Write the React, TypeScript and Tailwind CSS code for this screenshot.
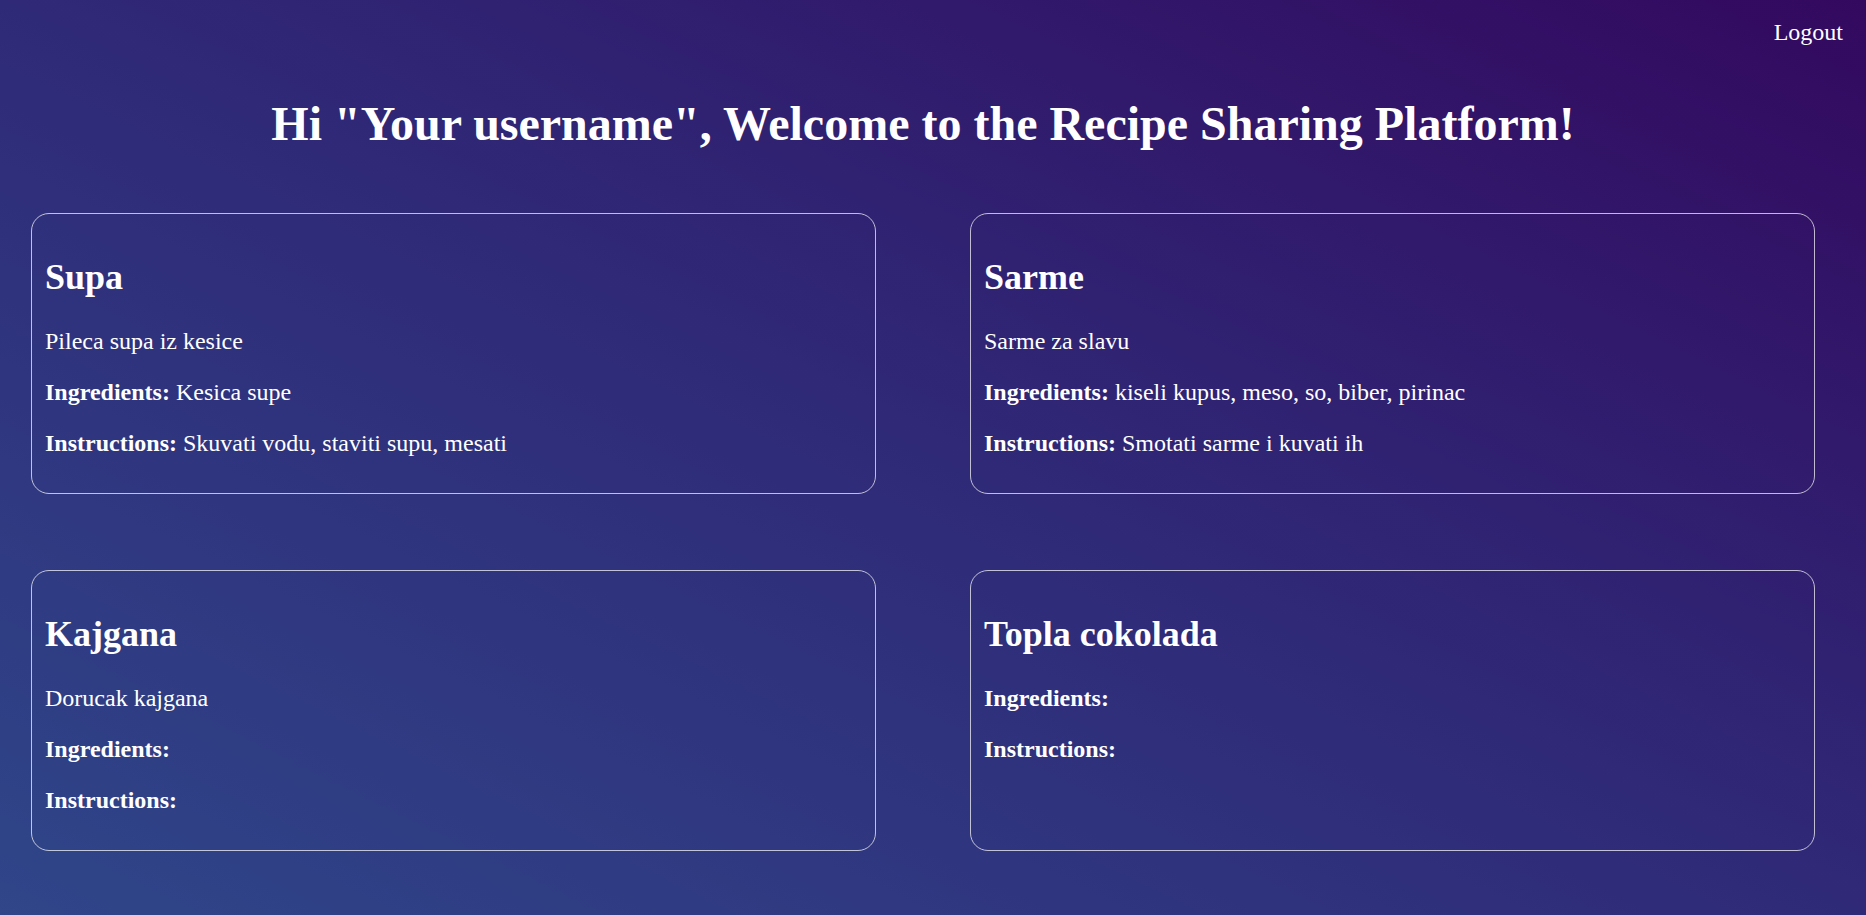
import React from "react";

type Recipe = {
  title: string;
  description?: string;
  ingredients: string;
  instructions: string;
};

const recipes: Recipe[] = [
  {
    title: "Supa",
    description: "Pileca supa iz kesice",
    ingredients: "Kesica supe",
    instructions: "Skuvati vodu, staviti supu, mesati",
  },
  {
    title: "Sarme",
    description: "Sarme za slavu",
    ingredients: "kiseli kupus, meso, so, biber, pirinac",
    instructions: "Smotati sarme i kuvati ih",
  },
  {
    title: "Kajgana",
    description: "Dorucak kajgana",
    ingredients: "",
    instructions: "",
  },
  {
    title: "Topla cokolada",
    ingredients: "",
    instructions: "",
  },
];

function Card({ r }: { r: Recipe }) {
  return (
    <div className="rounded-[18px] border border-white/70 px-[13px] pt-[43px] pb-[36px]">
      <h2 className="text-[36px] font-bold leading-[41px]">{r.title}</h2>
      <div className="mt-[30px] flex flex-col gap-[24px] text-[24px] leading-[27px]">
        {r.description !== undefined && <p>{r.description}</p>}
        <p>
          <strong className="font-bold">Ingredients:</strong>
          {r.ingredients ? " " + r.ingredients : ""}
        </p>
        <p>
          <strong className="font-bold">Instructions:</strong>
          {r.instructions ? " " + r.instructions : ""}
        </p>
      </div>
    </div>
  );
}

export default function App() {
  return (
    <div
      className="min-h-[915px] w-full bg-[linear-gradient(to_top_right,#2f4689,#2f2a78_50%,#33095f)] text-white"
      style={{ fontFamily: '"Liberation Serif", "Times New Roman", serif' }}
    >
      <div className="flex justify-end pt-[19px] pr-[23px]">
        <button className="text-[24px] leading-[27px]">Logout</button>
      </div>
      <div className="pl-[31px] pr-[51px]">
        <h1 className="mt-[50px] text-center text-[48px] font-bold leading-[55px]">
          Hi "Your username", Welcome to the Recipe Sharing Platform!
        </h1>
        <div className="mt-[62px] grid grid-cols-2 gap-x-[94px] gap-y-[76px] pb-[65px]">
          {recipes.map((r) => (
            <Card key={r.title} r={r} />
          ))}
        </div>
      </div>
    </div>
  );
}
